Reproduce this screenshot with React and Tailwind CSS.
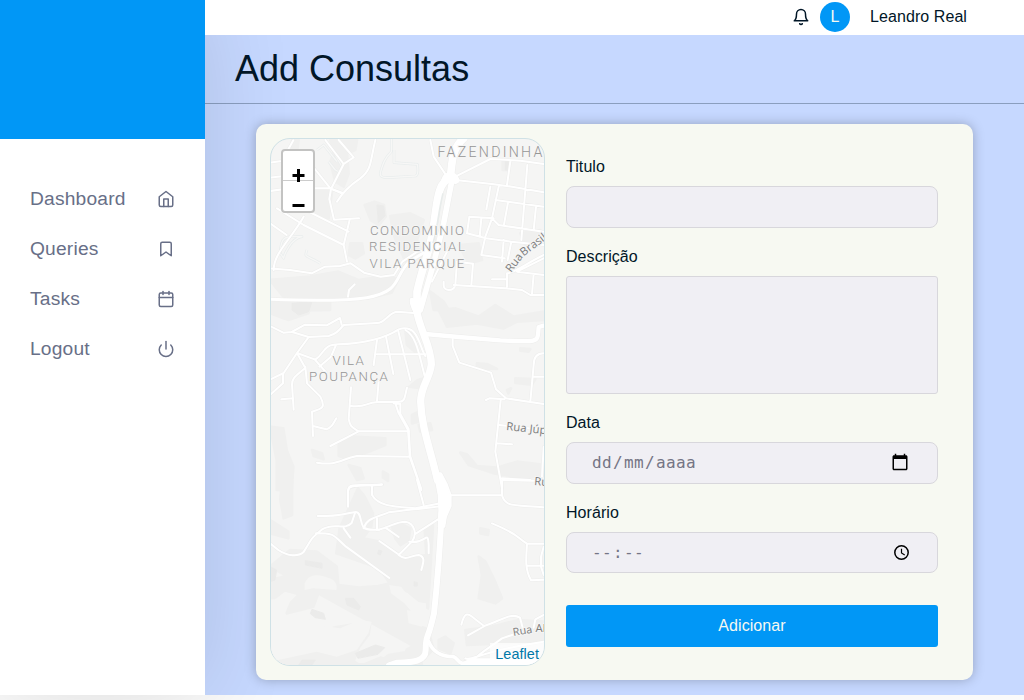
import React from "react";
import { FiBell, FiHome, FiBookmark, FiCalendar, FiPower } from "react-icons/fi";

const nav = [
  ["Dashboard", FiHome],
  ["Queries", FiBookmark],
  ["Tasks", FiCalendar],
  ["Logout", FiPower],
];

const land = {
  north: [
    "M205 30h80l-5 30-25 10 5 60-15 40-25-15-15-60 10-25z", "M90 30h20l-5 35-15-5z",
    "M308 225l30-10 28 10 5 35-20 25-25-15z", "M385 258l60-8 40 20-20 60 20 45-50 30-40-90z",
    "M160 180l50 5-10 80-45-20z", "M265 340l35 0 5 30-25 15-20-10z",
    "M24 450l120-10 85-15 60 25 80-12 40 10-20 40-75 18-250-6z", "M505 485l40 30 15 25h-45z", "M722 95h18v25h-18z",
    "M590 345l60-5 10 50-40 10z", "M24 515h180v25h-180z", "M775 310l60-10v35l-45 10z", "M90 515h90v25h-90z",
  ],
  middle: [
    "M24 5h130l-15 35-60 20-55-20z", "M530 30l50-5 70 25 50-35 55 35 90-15v25l-80 5-40 20-80-15-90 10z",
    "M430 90l25 15 15 60-35-30z", "M24 380l40 5 10 65 20 50-5 70H44V480z", "M230 430l40-20 100 5v20l-50 20-65 22-25-10z",
    "M150 450l30 10 5 18-30-10z", "M260 495l35 10 10 30-20 5z", "M363 515l15 8v20l-15-10z",
    "M595 458l20 5 30 35 60 5 60-18 85 10v30l-60 10-95-15-75-25z", "M645 190l30 2 30 15-60-2z",
    "M760 235l60 2-10 17-50-5z", "M735 270l12-5-8 15z", "M442 260l25-20 20-5-5 30z", "M450 345l20-10v30l-20 5z",
    "M470 375l35-5 5 20-35 5z", "M775 145l30 2-5 8-25-3z",
  ],
  south: [
    "M60 0h30v105l-25 10-10-55z", "M288 25l20 25 25 50-5 40-25 35 50 10 60 50 80-10-5-80 25-10-15 250-60-50-45-10-40-60-130-45 10-75z",
    "M24 260l60-50 80 5 60 45 5 55 60 8 60-5 45-10 30 50 40 30 5 50 30 10 15 60-30 30-60 15H60l-35-30v10l60-50 70-15 50 10 10-35 60-10 50-5-5 35-30 40-15 40 20 15 60-25 60 15 20-40 20-10z",
    "M24 300l80-20 80 20-30 80-80 20 20-50-70 5z", "M650 230l20 15 25 50 25 60-20 15-50-15 10-70z",
    "M655 145l25 5-2 15-23-5z", "M390 140l25-10 30 15-5 35-25 15-15-20z", "M24 120l55 35v20l-55-15z",
    "M610 450l80-10 80-20 75 5v60l-230 10z", "M530 480l20-10 25 20-10 30-35-15z", "M340 555l40-30 90-15 10 45z",
  ],
};

const dark = {
  north: "M730 95h12v25h-12zM345 225l20 3 4 30-20 20z",
  middle: "M90 10l60-5-10 30-30 10-20-15z",
  south: "M24 260l20 10-5 30-15 5zM130 242l50 8v15l-50-10zM150 388l35 12 5 18-30-5-15-12zM250 355l25 0 20 25-5 10-35-15zM280 520l60-25 28 8-20 20-60 12zM120 540l40 0-10 15h-40zM350 210l10 3-5 12-8-3zM456 305l10 3v10h-10z",
};

const minor = {
  north: [
    "M190 30l55 72 30-20-45-52M340 30c-15 60-10 90-45 115-30 20-55 45-70 70M245 102l-38 75-5 30 14 62 75-4M125 75l80 100 35 13",
    "M24 98l35-5 35-62M24 143l70-8M24 183l60-8h120l35 15M45 235l80 50 120 60 18-76M100 225l160 80M125 260c-40 70-90 110-90 160M24 280l50 35M245 345l10 50",
    "M24 415l60 5 65 10 40-20 45-2 32-8 40 28 50 12 40-5 25-40 45-30 30-5M258 500l3-20 17-17",
    "M505 30l10 50 40 60M580 140l105-53 90 5 70 10M580 150l110 12 60 8 95 17M745 95l-10 70M796 105l-18 225M685 170l-12 68M710 170l-20 95M700 210l145 20M738 218l-12 65M822 230l-7 70M690 265l20 20 135 20M622 260l73 5M622 260l-7 50 57 15 75 10 98 10M690 265l-20 55-12 55 70 10M725 330l-5 65M747 340l-10 50M658 265l-5 55",
    "M845 375c-60 30-90 55-110 55v40M845 385l-80 40 80 10M815 432l-5 60M690 448h45M545 455v10c0 20 30 20 35 0l5-70 48 6-5 65M575 465l155 10 50 5 25 15h40M560 355l-50 100",
  ],
  middle: [
    "M24 78l40 20 25-2 40-22 65 2 40-22 5 20",
    "M90 96l50 15 60-3c20-5 30-15 45-33l100-6c25 0 35-32 60-34l50 4",
    "M140 111l-35 48-40 60-41 20M63 220v30l-39 35M105 159l55 20c30-20 20-45 70-46 70-1 140-18 180-45 60-18 60 50 80 80M158 178l35 40M222 135l-15 35-35 30M105 159l25 45c-30 25-40 30-40 50l5 75M58 298l35-3M130 200l5 50 40 40c15 30 10 35-25 45l3 73M153 378l40 10c15-5 20-15 30-33",
    "M345 120l-10 75M372 110l22 112M408 90l37 150M345 163h145M430 90c35 20 40 70 58 138M267 262l-7 95c5 25 10 25 30 37h150M290 394l-85 44M267 318c50 5 40-10 80-12h60c25 0 20-15 28-43M350 243l-5 60",
    "M400 310l10 30 28 50 5 80 35 100M395 310l20 2v30l25 45 5 82 33 98M165 488c60 10 70-10 120-20l160 2M260 570c-5-25 50-10 100-17M330 555v15",
    "M572 118v20l20 50 95 30 15 50 30 27 113 17M672 300l10-5 45 3M716 300l-16 155 20 110M712 375l133 15M705 430l45 3M720 535l85 5M845 160c-20 0-30 10-30 35l-10 110M815 230h30M845 440l-5 90",
  ],
  south: [
    "M258 80v-50c5-20 60-10 102-16M330 15v30c20 35 70 35 130 40l75-15M167 108c80 0 60-5 115-12 15 0 12 30 22 45 10 12 35 8 48 8",
    "M24 190l25 20c30 20 60 20 75 7 30-45 15-35 55-68 40-25 65 5 90-20l10-30M245 145l20 28M162 160c60 0 50 5 90 40l130 94M305 145c10-30 30-30 75-48 50-8 100-10 155-18M350 149c40-10 50-24 80-24 30 5 35 40 20 60l-40 40c25 20 35 0 60 0 20 5 15 20 8 45M370 143l40 28M352 183l60 42M458 163l70-45M442 185c50 10 55-40 58 10v25M345 110v40",
    "M465 0l20 75M565 46h155V0M720 46c10 35 30 28 125 36M690 130c85 35 70 40 105 61h50M795 191c-2 40-8 75 12 110l38-2M795 257h50M845 200l-8 30v30l8 25M720 0l125 3",
    "M598 434c10-40 20-35 40-18l28 22c50-15 80-42 108-25l8 30M618 466l50-28M630 545c20-25 50-40 90-70l60-20M845 405l-25 13-5 25M610 535c20 10 35-20 235-50M630 535l25 17",
  ],
};

const outlines = "M388 25v40c-20 20-25 35-32 60-5 15 5 18 25 18l80-5c10-5 5-35 5-35l-70-5V60M200 95l20 25c10 5 10 10 20-10l-20-35M55 370c0-60 25-50 65-50-35 5-55 60-55 65zM135 360c-10 25 0 15 40 40M165 60l20-15 40 50";

const offsets = {
  north: "translate(-9 -9) scale(.333333)",
  middle: "translate(-9 161) scale(.333333)",
  south: "translate(-9 341) scale(.333333)",
};

function Roads({ stroke, extra }) {
  return (
    <g fill="none" stroke={stroke} strokeLinecap="round" strokeLinejoin="round">
      {Object.keys(minor).map((k) => (
        <g key={k} transform={offsets[k]} strokeWidth={6 + extra}>
          {minor[k].map((d) => <path key={d} d={d} />)}
        </g>
      ))}
      <g transform={offsets.north}>
        <path d="M24 508c150 5 230 5 290-5 110-20 80-65 130-110l50-30" strokeWidth={9 + extra} />
        <path d="M605 25c-35 30-35 70-40 120-40 10-40 80-50 140-10 80-30 110-50 200v60" strokeWidth={23 + extra} />
        <path d="M570 150l-25 130-30 120-40 140" strokeWidth={17 + extra} />
        <path d="M550 150c5-15 25-15 30 0" strokeWidth={24 + extra} />
      </g>
      <g transform={offsets.middle}>
        <path d="M450 0c0 20 10 30 14 42M480 0c0 20-10 30-14 42" strokeWidth={14 + extra} />
        <path d="M464 30c5 50 45 110 44 163-5 45-32 65-32 112 2 80 32 150 50 235" strokeWidth={22 + extra} />
        <path d="M490 102l100 9 125 10c125 7 110 5 115-40l15-4" strokeWidth={13 + extra} />
      </g>
      <g transform={offsets.south}>
        <path d="M539 100c-5 100-10 180-23 300-20 90-25 60-25 110 0 35-40 38-85 38l-25 8" strokeWidth={18 + extra} />
        <path d="M518 -20L537 -20 554 12 566 45 566 78 552 110 547 140H530L532 90 530 45Z" fill={stroke} strokeWidth={6 + extra} />
        <path d="M500 485c10 25 30 45 75 45 15 5 15 35 50 10h225M600 550h240" strokeWidth={11 + extra} />
      </g>
    </g>
  );
}

function MapView() {
  return (
    <div className="relative h-[528px] w-[275px] shrink-0 overflow-hidden rounded-[20px] border border-[#cfe1e6] bg-[#f5f5f4]">
      <svg viewBox="0 0 273 526" className="block h-[526px] w-[273px]">
        {Object.keys(land).map((k) => (
          <g key={k} transform={offsets[k]} strokeLinejoin="round" strokeWidth="8">
            {land[k].map((d) => <path key={d} d={d} fill="#f0f0ef" stroke="#f0f0ef" />)}
            <path d={dark[k]} fill="#ebebea" stroke="#ebebea" strokeWidth="3" />
          </g>
        ))}
        <g transform={offsets.south} fill="#f5f5f4">
          <path d="M128 310c15-35 50-25 75-15 15 5 25 20 20 35l-70-5-25 5zM382 315l35 5 20 25 25 20 30 5v35l-30 5-35-40-40-30zM435 390l45 10v40l-40-10z" />
          <path d="M24 370l45-35 35 10-40 40 10 25 45-10 45 35 70 10 60-25 35 5-10 35-35 50-60 20-60-15-70 15-70 15z" />
        </g>
        <g transform={offsets.north}>
          <path d={outlines} fill="none" stroke="#e9eded" strokeWidth="8" strokeLinejoin="round" />
          <path d={outlines} fill="none" stroke="#f7f7f6" strokeWidth="4" strokeLinejoin="round" />
        </g>
        <Roads stroke="#ededec" extra={3} />
        <Roads stroke="#ffffff" extra={0} />
        <path d="M543 190c-15 60-15 100-30 150" transform={offsets.north} fill="none" stroke="#e8eceb" strokeWidth="5" />
        <g className="font-['Roboto',sans-serif]" fill="#969696" fontSize="13.3" stroke="#f5f5f4" strokeWidth="2" paintOrder="stroke" fontWeight="300">
          <text x="166.5" y="18" textLength="105" fontSize="14.2">FAZENDINHA</text>
          <text x="99" y="96" textLength="94">CONDOMINIO</text>
          <text x="98" y="112.3" textLength="96">RESIDENCIAL</text>
          <text x="98.5" y="129" textLength="95">VILA PARQUE</text>
          <text x="61.500" y="225.5" textLength="31.500">VILA</text>
          <text x="38" y="242" textLength="79">POUPANÇA</text>
        </g>
        <g className="font-['Open_Sans',sans-serif]" fill="#7e7e7e" fontSize="11.3" stroke="#f5f5f4" strokeWidth="2" paintOrder="stroke">
          <text transform="translate(240 134) rotate(-53)">Rua</text>
          <text transform="translate(252.5 117.5) rotate(-37)">Brasil</text>
          <text transform="translate(235 291) rotate(6)">Rua Júpiter</text>
          <text transform="translate(263 346) rotate(5)">Rua</text>
          <text transform="translate(242.5 497) rotate(-10)" fontSize="10.8">Rua</text>
          <text x="264.5" y="493">Alba</text>
        </g>
      </svg>
      <div className="absolute left-2.5 top-2.5 flex h-16 w-[34px] flex-col rounded border-2 border-[#c3c3c2] bg-white text-black">
        <span className="flex h-[30px] items-end justify-center border-b border-[#cccccc]">
          <svg viewBox="0 0 13 13" className="-mb-0.5 h-[13px] w-[13px] shrink-0"><path d="M.5 6.500h12M6.500 0v13" stroke="currentColor" strokeWidth="3" /></svg>
        </span>
        <span className="flex h-[30px] items-end justify-center pb-1">
          <svg viewBox="0 0 13 3" className="h-[3px] w-[13px]"><path d="M.5 1.500h12" stroke="currentColor" strokeWidth="3" /></svg>
        </span>
      </div>
      <div className="absolute bottom-0 right-0 flex h-[22px] items-center bg-white/70 px-[5px] pt-0.5 text-[14.4px] text-[#0078a8]">Leaflet</div>
    </div>
  );
}

export default function App() {
  return (
    <div className="flex h-[700px] w-[1024px] flex-col overflow-hidden bg-[#fafafa] font-['Liberation_Sans',Arial,sans-serif] text-base tracking-[0.07px] text-[#011627]">
      <div className="flex h-[695px] shrink-0">
        <aside className="relative z-10 flex w-[205px] shrink-0 flex-col bg-white shadow-[0_0_90px_rgba(0,0,0,0.12)]">
          <div className="h-[139px] bg-[#0197f6]" />
          <nav className="flex flex-col pt-[35px]">
            {nav.map(([label, Icon]) => (
              <a key={label} className="flex h-[50px] items-center justify-between px-[30px] text-[19.2px] tracking-[0.2px] text-[#686f87]">
                {label}
                <Icon size={18} />
              </a>
            ))}
          </nav>
        </aside>
        <main className="flex grow flex-col bg-[#c6d8ff]">
          <header className="relative z-20 flex h-[35px] items-center justify-end bg-white pr-[57px]">
            <FiBell size={18} className="mt-[-2px]" />
            <span className="ml-2.5 mt-[-1px] flex h-[30px] w-[30px] items-center justify-center rounded-full bg-[#0197f6] text-[#f7f9f2]">L</span>
            <span className="ml-5 mt-[-2px]">Leandro Real</span>
          </header>
          <div className="relative z-20 flex h-[69px] items-center border-b border-[#011627]/30 pl-[30px]">
            <h1 className="text-[36px] leading-none tracking-normal">Add Consultas</h1>
          </div>
          <section className="relative z-20 ml-[51px] mt-5 flex h-[556px] w-[717px] gap-[21px] rounded-[10px] bg-[#f7f9f2] p-3.5 shadow-[0_0_12px_rgba(0,0,0,0.25)]">
            <MapView />
            <form className="flex w-[372px] flex-col pt-[17px]">
              <label className="leading-6">Titulo</label>
              <div className="mt-[7px] h-[42px] rounded-lg border border-[#d8d7dc] bg-[#f0eff4]" />
              <label className="mt-[17px] leading-6">Descrição</label>
              <div className="mt-[7px] h-[118px] rounded-[3px] border border-[#d8d7dc] bg-[#f0eff4]" />
              <label className="mt-[17px] leading-6">Data</label>
              <div className="mt-[7px] flex h-[42px] items-center justify-between rounded-lg border border-[#d8d7dc] bg-[#f0eff4] pl-6 pr-7 font-['DejaVu_Sans_Mono',monospace] tracking-[0.37px] text-[#757585]">
                <span className="mt-[-1px] flex"><span className="px-px">dd</span>/<span className="px-px">mm</span>/<span className="px-px">aaaa</span></span>
                <svg viewBox="0 0 24 24" className="mt-[-2px] h-[18px] w-[18px]" fill="#000"><path d="M20 3h-1V1h-2v2H7V1H5v2H4c-1.100 0-2 .9-2 2v16c0 1.100.9 2 2 2h16c1.100 0 2-.9 2-2V5c0-1.100-.9-2-2-2zm0 18H4V8h16v13z" /></svg>
              </div>
              <label className="mt-[17px] leading-6">Horário</label>
              <div className="mt-[7px] flex h-[41px] items-center justify-between rounded-lg border border-[#d8d7dc] bg-[#f0eff4] pl-6 pr-7 font-['DejaVu_Sans_Mono',monospace] tracking-[0.37px] text-[#757585]">
                <span className="flex"><span className="px-px">--</span>:<span className="px-px">--</span></span>
                <svg viewBox="0 0 15 15" className="h-[15px] w-[15px]" fill="none" stroke="#000"><circle cx="7.5" cy="7.5" r="6.7" strokeWidth="1.5" /><path d="M7.500 3.700v4.200l3.200 2" strokeWidth="1.200" /></svg>
              </div>
              <button type="button" className="mt-8 h-[42px] rounded-[3px] bg-[#0197f6] text-[#f7f9f2]">Adicionar</button>
            </form>
          </section>
        </main>
      </div>
    </div>
  );
}
